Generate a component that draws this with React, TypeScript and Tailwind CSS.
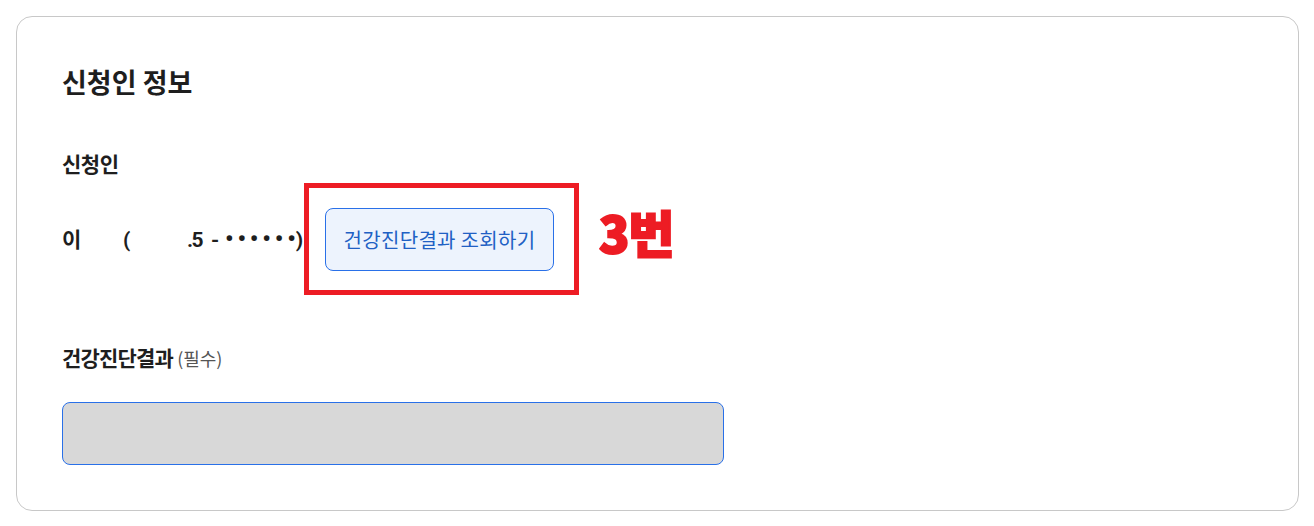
export default function App() {
  const font = { fontFamily: '"Noto Sans CJK KR", "Noto Sans", sans-serif' };
  return (
    <div className="w-[1314px] h-[526px] bg-white p-4 overflow-hidden" style={font}>
      <div className="relative h-[495px] w-[1283px] rounded-[16px] border border-[#c8c8c8] pl-[45px] pt-[46px] text-[#1e1e1e]">
        <h2 className="text-[27px] leading-[38px] font-bold h-[38px]">신청인 정보</h2>
        <div className="mt-[47px] text-[21px] leading-[30px] font-bold h-[30px] tracking-[-0.5px]">신청인</div>
        <div className="mt-[30px] flex items-center h-[63px]">
          <div className="w-[263px] flex items-baseline text-[21px] font-bold leading-[30px] whitespace-pre" style={{ fontFamily: '"Roboto", "Noto Sans CJK KR", sans-serif' }}>
            <span className="w-[61px]">이</span>
            <span className="w-[64px]">(</span>
            <span className="w-[24px] text-[21px] tracking-[-1.5px]">.5</span>
            <span className="w-[14px]">-</span>
            <span className="text-[24px]"><span className="tracking-[3.8px]">•••••</span>•</span>
            <span>)</span>
          </div>
          <button className="w-[229px] h-[63px] rounded-[8px] border border-[#2970e8] bg-[#edf3fd] text-[20px] tracking-[0.3px] text-[#2160c4]">건강진단결과 조회하기</button>
        </div>
        <div className="mt-[71px] h-[30px] flex items-baseline gap-[4px] leading-[30px]">
          <span className="text-[21px] font-bold tracking-[-0.8px]">건강진단결과</span>
          <span className="text-[18px] text-[#555555]">(필수)</span>
        </div>
        <div className="mt-[30px] w-[662px] h-[63px] rounded-[8px] border border-[#2970e8] bg-[#d8d8d8]" />
        <div className="absolute left-[287px] top-[166px] w-[275px] h-[112px] border-[5px] border-[#ed1c24]" />
        <div className="absolute left-[582px] top-[184px] text-[50px] leading-[60px] font-black text-[#ed1c24] tracking-[-1px] [-webkit-text-stroke:2px_#ed1c24]">3번</div>
      </div>
    </div>
  );
}
